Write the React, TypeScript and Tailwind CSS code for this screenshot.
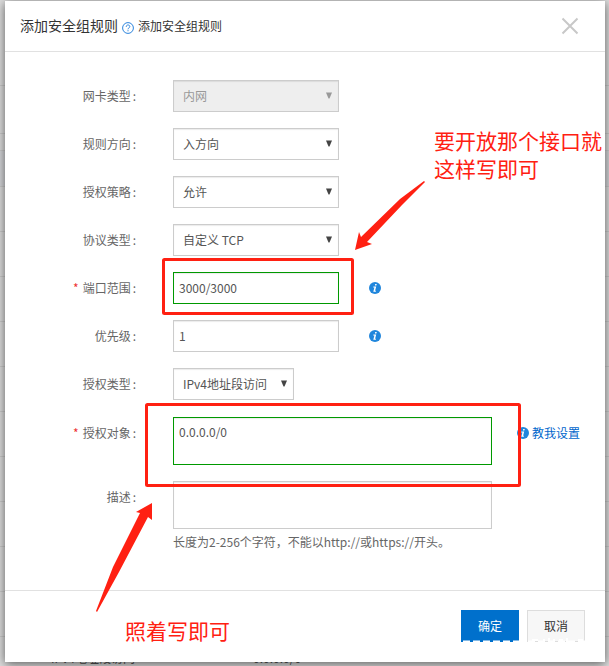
import React from 'react';

const inset = 'shadow-[inset_0_1px_1px_rgba(0,0,0,0.08)]';

const selectBase =
  'h-8 w-full appearance-none border border-[#ccc] pl-[9px] pr-6 text-xs shadow-[inset_0_1px_1px_rgba(0,0,0,0.08)]';

function Field({ id, label, required, tall, children }: { id: string; label: string; required?: boolean; tall?: boolean; children: React.ReactNode }) {
  return (
    <div className={tall ? 'flex items-start' : 'flex items-center'}>
      <label htmlFor={id} className="w-[131px] shrink-0 text-right leading-8">
        {required && <span className="mr-1 text-[#e33]">*</span>}
        {label}<span className="ml-0.5">:</span>
      </label>
      <div className="ml-[37px] flex min-w-0 flex-1 items-center">{children}</div>
    </div>
  );
}

function Select({ id, value, width, disabled }: { id: string; value: string; width: string; disabled?: boolean }) {
  return (
    <div className={'relative ' + width}>
      <select id={id} disabled={disabled} className={selectBase + (disabled ? ' bg-[#eee] text-[#999] opacity-100' : ' bg-white text-[#555]')}>
        <option>{value}</option>
      </select>
      <svg className={'pointer-events-none absolute right-[7px] top-3 h-[7px] w-[6px] ' + (disabled ? 'text-[#999]' : 'text-[#444]')} viewBox="0 0 6 7" aria-hidden="true">
        <path d="M0 0.5H6L3.5 6.5H2.5Z" fill="currentColor" />
      </svg>
    </div>
  );
}

function InfoIcon() {
  return (
    <svg className="h-3 w-3 shrink-0" viewBox="0 0 12 12" aria-hidden="true">
      <circle cx="6" cy="6" r="6" fill="#2086dc" />
      <path d="M6.2 2.1H7.8L7.4 3.6H5.9ZM4.4 4.5H7.2L6.1 8.8H7L6.8 9.7H4.3L5.4 5.4H4.2Z" fill="#fff" />
    </svg>
  );
}

const rows = Array.from({ length: 11 }, (_, i) => i);

export default function App() {
  return (
    <div className="relative overflow-hidden bg-[#dedede] pb-1 pl-[5px] pr-1 pt-px font-['Noto_Sans_CJK_SC',sans-serif] text-xs text-[#666]">
      <div className="absolute inset-x-0 top-[41px]" aria-hidden="true">
        <div className="h-[45px] border-b border-[#cbcbcb]" />
        <div className="h-12 border-b border-[#cbcbcb]" />
        <div className="h-[17px] border-b border-[#cbcbcb]" />
        <div className="h-9 border-b border-[#cbcbcb] bg-[#d6d7da]" />
        {rows.slice(1).map((i) => (
          <div key={i} className="h-[45px] border-b border-[#cbcbcb]" />
        ))}
      </div>
      <div className="absolute bottom-0 left-[51px] flex gap-[118px] leading-4 text-[#555]" aria-hidden="true">
        <span>IPv4地址段访问</span>
        <span>0.0.0.0/0</span>
      </div>

      <section role="dialog" aria-labelledby="title" className="relative bg-white shadow-[0_2px_10px_rgba(0,0,0,0.6)]">
        <header className="flex h-[51px] items-center border-b border-[#e1e1e1] pl-[15px] pr-[26px] text-[#333]">
          <h1 id="title" className="pb-0.5 text-sm">添加安全组规则</h1>
          <svg className="ml-1 mt-1 h-3 w-3" viewBox="0 0 12 12" fill="none" stroke="#2b83dc" aria-hidden="true">
            <circle cx="6" cy="6" r="5.4" />
            <path d="M4.2 4.8C4.2 2.4 7.8 2.4 7.8 4.6C7.8 5.9 6 5.8 6 7.3M6 8.2V9.3" />
          </svg>
          <a href="#help" className="ml-1">添加安全组规则</a>
          <button type="button" aria-label="关闭" className="ml-auto">
            <svg className="h-[18px] w-[18px]" viewBox="0 0 18 18" stroke="#c8c8c8" strokeWidth="2">
              <path d="M1.5 1.5L16.5 16.5M16.5 1.5L1.5 16.5" />
            </svg>
          </button>
        </header>

        <form className="flex flex-col gap-4 pb-[39px] pt-7">
          <Field id="nic" label="网卡类型"><Select id="nic" value="内网" width="w-[166px]" disabled /></Field>
          <Field id="dir" label="规则方向"><Select id="dir" value="入方向" width="w-[166px]" /></Field>
          <Field id="policy" label="授权策略"><Select id="policy" value="允许" width="w-[166px]" /></Field>
          <Field id="proto" label="协议类型"><Select id="proto" value="自定义 TCP" width="w-[166px]" /></Field>
          <Field id="port" label="端口范围" required>
            <input id="port" defaultValue="3000/3000" className={'mr-[30px] h-8 w-[166px] border border-[#090] px-[5px] pb-0.5 text-[#555] ' + inset} />
            <InfoIcon />
          </Field>
          <Field id="priority" label="优先级">
            <input id="priority" defaultValue="1" className={'mr-[30px] h-8 w-[166px] border border-[#ccc] px-[5px] pb-0.5 text-[#555] ' + inset} />
            <InfoIcon />
          </Field>
          <Field id="kind" label="授权类型"><Select id="kind" value="IPv4地址段访问" width="w-[121px]" /></Field>
          <div className="flex flex-col gap-4 pt-px">
            <Field id="target" label="授权对象" required tall>
              <textarea id="target" defaultValue="0.0.0.0/0" className={'mr-[25px] h-12 w-[319px] resize-none border border-[#090] px-[5px] py-1 leading-5 text-[#555] ' + inset} />
              <div className="flex items-center gap-[3px] self-start pt-2">
                <InfoIcon />
                <a href="#guide" className="text-[#06c]">教我设置</a>
              </div>
            </Field>
            <Field id="desc" label="描述" tall>
              <div>
                <textarea id="desc" className={'block h-12 w-[319px] resize-none border border-[#ccc] px-[5px] py-1 leading-5 ' + inset} />
                <p className="mt-1 leading-[18px]">长度为2-256个字符，不能以http://或https://开头。</p>
              </div>
            </Field>
          </div>
        </form>

        <footer className="flex justify-end gap-2 border-t border-[#e1e1e1] pb-5 pr-5 pt-[19px]">
          <button type="button" className="h-8 w-[58px] bg-[#0070cc] text-white">确定</button>
          <button type="button" className="h-8 w-[58px] border border-[#ddd] bg-[#f7f7f7] text-[#333]">取消</button>
        </footer>
      </section>

      <svg className="pointer-events-none absolute left-0 top-0 h-[666px] w-[609px]" viewBox="0 0 609 666" fill="none" aria-hidden="true">
        <rect x="163.5" y="259.5" width="189" height="54" rx="1" stroke="#ff2012" strokeWidth="3" />
        <rect x="146.5" y="404.5" width="373" height="81" rx="1" stroke="#ff2012" strokeWidth="3" />
        <path d="M424 181L400 199L361 237L359 232L355 250L372 244L367 242L402 205L425 182Z" fill="#ff2012" />
        <path d="M96 611L113 567L140 513L136 512L152 503L152 520L148 517L119 572L97 612Z" fill="#ff2012" />
        <path d="M463 641.5H519M528 641.5H586" stroke="#fff" strokeWidth="2" strokeDasharray="7 3" />
        <path d="M532 640H538M543 640H545M549 638V642M554 639V642M559 640H563M567 638V642M578 640H583" stroke="#fff" strokeWidth="2" />
      </svg>
      <p className="absolute left-[434px] top-[126px] text-[21px] leading-7 text-[#ff2012]">要开放那个接口就<br />这样写即可</p>
      <p className="absolute left-[125px] top-[616px] text-[21px] leading-7 text-[#ff2012]">照着写即可</p>
    </div>
  );
}
